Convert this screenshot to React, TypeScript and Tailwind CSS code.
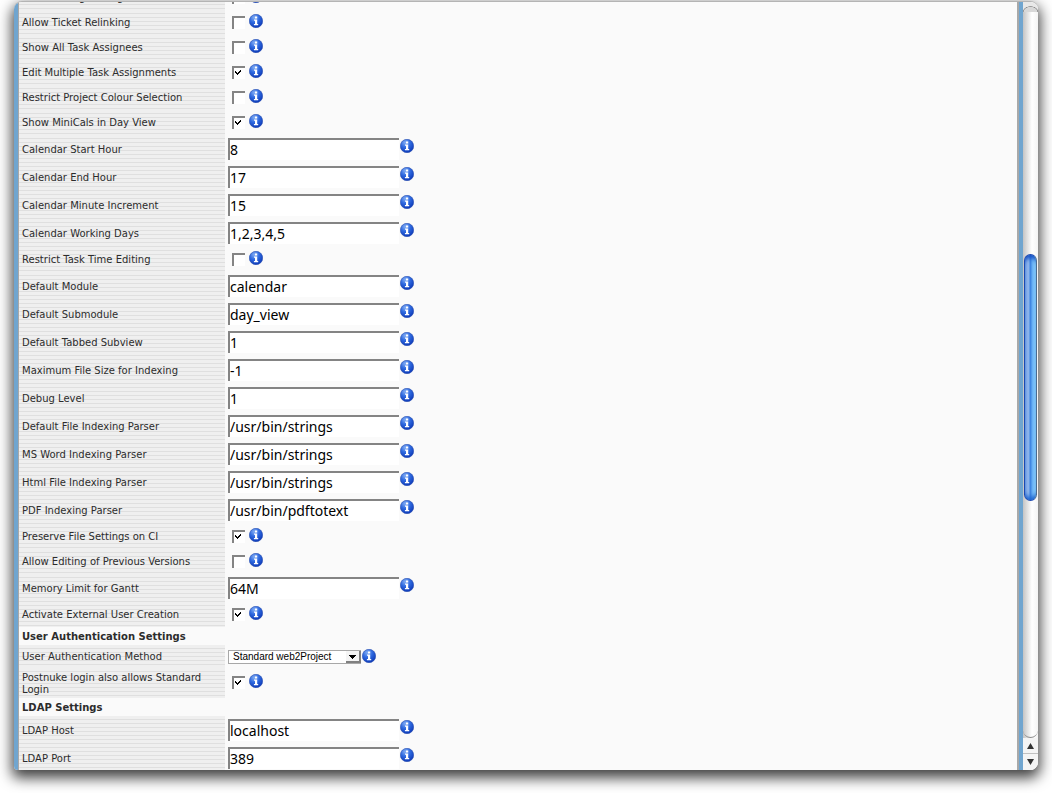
import React, { useId } from "react";

type Row =
  | { kind: "check"; label: string; on?: boolean; tall?: boolean }
  | { kind: "text"; label: string; value: string }
  | { kind: "select"; label: string; value: string }
  | { kind: "head"; label: string };

const rows: Row[] = [
  { kind: "check", label: "Hide Missing Coding" },
  { kind: "check", label: "Allow Ticket Relinking" },
  { kind: "check", label: "Show All Task Assignees" },
  { kind: "check", label: "Edit Multiple Task Assignments", on: true },
  { kind: "check", label: "Restrict Project Colour Selection" },
  { kind: "check", label: "Show MiniCals in Day View", on: true },
  { kind: "text", label: "Calendar Start Hour", value: "8" },
  { kind: "text", label: "Calendar End Hour", value: "17" },
  { kind: "text", label: "Calendar Minute Increment", value: "15" },
  { kind: "text", label: "Calendar Working Days", value: "1,2,3,4,5" },
  { kind: "check", label: "Restrict Task Time Editing" },
  { kind: "text", label: "Default Module", value: "calendar" },
  { kind: "text", label: "Default Submodule", value: "day_view" },
  { kind: "text", label: "Default Tabbed Subview", value: "1" },
  { kind: "text", label: "Maximum File Size for Indexing", value: "-1" },
  { kind: "text", label: "Debug Level", value: "1" },
  { kind: "text", label: "Default File Indexing Parser", value: "/usr/bin/strings" },
  { kind: "text", label: "MS Word Indexing Parser", value: "/usr/bin/strings" },
  { kind: "text", label: "Html File Indexing Parser", value: "/usr/bin/strings" },
  { kind: "text", label: "PDF Indexing Parser", value: "/usr/bin/pdftotext" },
  { kind: "check", label: "Preserve File Settings on CI", on: true },
  { kind: "check", label: "Allow Editing of Previous Versions" },
  { kind: "text", label: "Memory Limit for Gantt", value: "64M" },
  { kind: "check", label: "Activate External User Creation", on: true },
  { kind: "head", label: "User Authentication Settings" },
  { kind: "select", label: "User Authentication Method", value: "Standard web2Project" },
  { kind: "check", label: "Postnuke login also allows Standard Login", on: true, tall: true },
  { kind: "head", label: "LDAP Settings" },
  { kind: "text", label: "LDAP Host", value: "localhost" },
  { kind: "text", label: "LDAP Port", value: "389" },
];

function InfoIcon() {
  return (
    <svg viewBox="0 0 14 14" className="block h-[14px] w-[14px]" aria-hidden="true">
      <defs>
        <radialGradient id="ball" cx="0.38" cy="0.25" r="0.8">
          <stop offset="0" stopColor="#86b0f4" />
          <stop offset="0.45" stopColor="#2f6ae0" />
          <stop offset="1" stopColor="#0a35b4" />
        </radialGradient>
      </defs>
      <circle cx="7" cy="7" r="6.7" fill="url(#ball)" stroke="#2a4fae" strokeWidth="0.6" />
      <path d="M6 2.6h2.200v1.900H6zM5 5.500h3.200v4.600h1v1.200H4.900v-1.200H6V6.700H5z" fill="#fff" />
    </svg>
  );
}

function InfoButton({ label }: { label: string }) {
  return (
    <button type="button" aria-label={"About " + label} className="block shrink-0">
      <InfoIcon />
    </button>
  );
}

const labelCell =
  "w-[206px] p-0 pl-[3px] text-left align-middle font-normal bg-[repeating-linear-gradient(180deg,#efefef_0px,#efefef_3px,#dfdfdf_3px,#dfdfdf_4px)]";

function CheckBox({ id, on }: { id: string; on?: boolean }) {
  return (
    <span className="relative block h-[13px] w-[13px] shrink-0">
      <input
        id={id}
        type="checkbox"
        defaultChecked={on}
        className="peer block h-[13px] w-[13px] appearance-none border-t-2 border-l-2 border-[#848484] bg-white"
      />
      <svg
        viewBox="0 0 13 13"
        className="pointer-events-none absolute inset-0 hidden h-[13px] w-[13px] peer-checked:block"
        shapeRendering="crispEdges"
        aria-hidden="true"
      >
        <path d="M3 5h1v1h1v1h1v-1h1v-1h1v-1h1v2h-1v1h-1v1h-1v1h-1v-1h-1v-1h-1z" fill="#000" />
      </svg>
    </span>
  );
}

function SettingRow({ row }: { row: Row }) {
  const id = useId();
  if (row.kind === "head") {
    return (
      <tr className="h-[18px]">
        <th scope="rowgroup" colSpan={2} className="p-0 pt-[2px] pl-[3px] text-left align-middle font-bold">
          {row.label}
        </th>
      </tr>
    );
  }
  if (row.kind === "text") {
    return (
      <tr className="h-7">
        <th scope="row" className={labelCell}>
          <label htmlFor={id} className="block pt-[2px]">
            {row.label}
          </label>
        </th>
        <td className="p-0 pl-[3px] align-middle">
          <div className="flex items-start gap-px">
            <input
              id={id}
              type="text"
              defaultValue={row.value}
              className="block h-[22px] w-[171px] border-t-2 border-l-2 border-[#848484] bg-white pb-[2px] font-['Noto_Sans','Open_Sans',sans-serif] text-[14px] text-black outline-none"
            />
            <span className="block pt-px">
              <InfoButton label={row.label} />
            </span>
          </div>
        </td>
      </tr>
    );
  }
  if (row.kind === "select") {
    return (
      <tr className="h-[23px]">
        <th scope="row" className={labelCell}>
          <label htmlFor={id}>{row.label}</label>
        </th>
        <td className="p-0 pl-[3px] align-middle">
          <div className="flex items-start gap-px">
            <span className="block pt-px">
              <span className="relative block">
                <select
                  id={id}
                  defaultValue={row.value}
                  className="block h-[14px] w-[133px] appearance-none border border-[#a8a8a8] bg-white pl-1 font-['Liberation_Sans',Arial,sans-serif] text-[10px] leading-3 text-black"
                >
                  <option>{row.value}</option>
                </select>
                <svg
                  viewBox="0 0 15 12"
                  className="pointer-events-none absolute top-px right-0 h-3 w-[15px]"
                  shapeRendering="crispEdges"
                  aria-hidden="true"
                >
                  <path d="M0 0h15v12H0z" fill="#808080" />
                  <path d="M0 0h13v10H0z" fill="#f4f4f4" />
                  <path d="M3 4h7v1h-1v1h-1v1h-1v1h-1v-1h-1v-1h-1v-1h-1z" fill="#000" />
                </svg>
              </span>
            </span>
            <InfoButton label={row.label} />
          </div>
        </td>
      </tr>
    );
  }
  return (
    <tr className={row.tall ? "h-[30px]" : "h-[25px]"}>
      <th scope="row" className={labelCell}>
        <label htmlFor={id} className={row.tall ? "block pt-[2px]" : "block"}>
          {row.label}
        </label>
      </th>
      <td className="p-0 pl-[7px] align-middle">
        <div className="flex items-start gap-1 pb-[3px]">
          <span className="block pt-[2px]">
            <CheckBox id={id} on={row.on} />
          </span>
          <InfoButton label={row.label} />
        </div>
      </td>
    </tr>
  );
}

function ScrollBar() {
  return (
    <div className="flex w-[15px] shrink-0 flex-col bg-[linear-gradient(90deg,#c4c4c4,#ececec_40%,#ffffff_60%,#f4f4f4)]">
      <div className="h-[10px] shrink-0 bg-[radial-gradient(ellipse_8px_6px_at_50%_100%,#d8d8d8_80%,#8c8c8c_90%,#e8e8e8_100%)]" />
      <div className="flex min-h-0 flex-1 flex-col px-px">
        <div className="flex-[243]" />
        <div className="flex-[247] rounded-full border border-[#1c48b0] border-r-[#4a6a90] bg-[linear-gradient(90deg,#7fa9e6,#93b8ec_30%,#3f86e2_50%,#6cb4f6_70%,#9ae0ff)] shadow-[inset_0_5px_4px_-2px_#1550c4,inset_0_-5px_4px_-2px_#1f66d0]" />
        <div className="flex-[230]" />
      </div>
      <div className="h-[8px] shrink-0 rounded-b-full border-b border-[#8c8c8c]" />
      <button type="button" aria-label="Scroll up" className="flex h-4 shrink-0 items-center justify-center border-b border-[#c0c0c0] bg-[#f4f4f4]">
        <svg viewBox="0 0 7 6" className="h-[6px] w-[7px]" aria-hidden="true">
          <path d="M3.500 0L7 6H0z" fill="#333" />
        </svg>
      </button>
      <button type="button" aria-label="Scroll down" className="flex h-4 shrink-0 items-center justify-center bg-[#f4f4f4]">
        <svg viewBox="0 0 7 6" className="h-[6px] w-[7px]" aria-hidden="true">
          <path d="M3.500 6L7 0H0z" fill="#333" />
        </svg>
      </button>
    </div>
  );
}

export default function App() {
  return (
    <div className="h-screen overflow-hidden bg-white pt-px pr-[14px] pb-[23px] pl-[14px] font-['DejaVu_Sans',Verdana,sans-serif] text-[10px] leading-3 text-[#2c2c2c]">
      <div className="flex h-full overflow-hidden rounded-t-lg rounded-br-lg rounded-bl-sm border-t border-[#b4b4b4] bg-[#fafafa] shadow-[0_6px_14px_2px_rgba(0,0,0,0.75)]">
        <div className="w-1 shrink-0 bg-[#70a5cf]" />
        <div className="w-px shrink-0 bg-[#a8a8a8]" />
        <main className="min-w-0 flex-1 overflow-hidden">
          <table className="-mt-[17px] w-full table-fixed border-collapse">
            <colgroup>
              <col className="w-[206px]" />
              <col />
            </colgroup>
            <tbody>
              {rows.map((row) => (
                <SettingRow key={row.label} row={row} />
              ))}
            </tbody>
          </table>
        </main>
        <div className="w-[2px] shrink-0 bg-[#a8a8a8]" />
        <div className="w-1 shrink-0 bg-[#70a5cf]" />
        <ScrollBar />
      </div>
    </div>
  );
}
